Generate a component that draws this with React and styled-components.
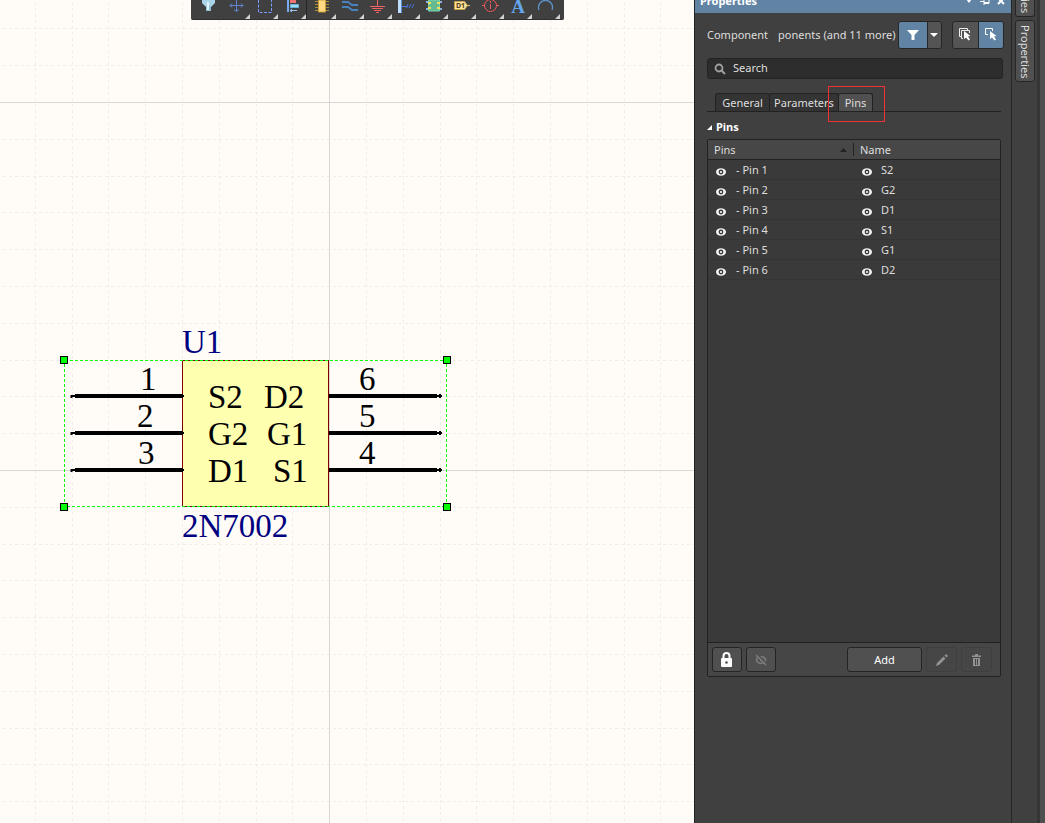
import React from "react";
import styled, { createGlobalStyle, css } from "styled-components";

const GlobalStyle = createGlobalStyle`
  *, *::before, *::after { box-sizing: border-box; }
  body {
    margin: 0;
    background: #404040;
    color: #dedede;
    font-family: "Noto Sans", "Open Sans", sans-serif;
    font-size: 11px;
    line-height: 20px;
  }
  button, input { font: inherit; color: inherit; }
`;

const Workspace = styled.div`
  display: flex;
  height: 100vh;
  overflow: hidden;
`;

const Editor = styled.main`
  position: relative;
  flex: 1;
  min-width: 0;
  background: #fffcf8;
`;

const Sheet = styled.svg`
  display: block;
  width: 100%;
  height: 100%;
`;

const Toolbar = styled.div`
  position: absolute;
  top: 0;
  left: 191px;
  display: flex;
  height: 20px;
  padding: 0 4px 0 3px;
  background: #404040;
  border-bottom: 1px solid #342e2e;
  border-radius: 0 0 2px 2px;
`;

const ToolButton = styled.button`
  width: 28px;
  height: 19px;
  padding: 0;
  border: 0;
  background: none;
  ${(p) => p.$divided && css`
    margin-right: 2px;
    box-shadow: 1px 0 0 #262626;
  `}

  svg { display: block; }
`;

const Panel = styled.aside`
  width: 318px;
  flex: none;
  background: #404040;
  border-left: 1px solid #222;
  border-right: 1px solid #262626;
`;

const PanelHeader = styled.header`
  display: flex;
  align-items: flex-end;
  height: 13px;
  padding: 0 2px 0 5px;
  overflow: hidden;
  background: #6284a4;
  color: #fff;
`;

const PanelTitle = styled.h1`
  flex: 1;
  margin: 0;
  font-size: 11px;
  font-weight: 700;
  line-height: 24px;
`;

const HeaderButton = styled.button`
  display: flex;
  align-items: center;
  justify-content: center;
  width: 16px;
  height: 24px;
  padding: 0;
  border: 0;
  background: none;
`;

const PanelBody = styled.div`
  padding: 8px 8px 0 12px;
`;

const ScopeRow = styled.div`
  display: flex;
  align-items: center;
  height: 28px;
  gap: 10px;
`;

const ScopeFilter = styled.span`
  flex: 1;
  text-align: right;
  white-space: nowrap;
  margin-right: -8px;
`;

const ButtonGroup = styled.div`
  display: flex;
  flex: none;
  height: 28px;
  border: 1px solid #262626;
  border-radius: 3px;
  overflow: hidden;
`;

const GroupButton = styled.button`
  display: flex;
  align-items: center;
  justify-content: center;
  width: ${(p) => (p.$narrow ? 14 : p.$wide ? 28 : 25)}px;
  padding: 0;
  border: 0;
  background: ${(p) => (p.$active ? "#6284a4" : "#545454")};

  & + & { border-left: 1px solid #262626; }
`;

const SearchBox = styled.label`
  display: flex;
  align-items: center;
  gap: 7px;
  height: 21px;
  margin-top: 9px;
  padding: 0 6px;
  border: 1px solid #232323;
  border-radius: 3px;
  background: #2d2d2d;
`;

const SearchInput = styled.input`
  flex: 1;
  min-width: 0;
  height: 19px;
  padding: 0 0 2px;
  border: 0;
  outline: 0;
  background: none;

  &::placeholder { color: #dedede; opacity: 1; }
`;

const Tabs = styled.div`
  position: relative;
  display: flex;
  margin: 14px 2px 0 0;
  padding-left: 8px;
  border-bottom: 1px solid #222;
`;

const Tab = styled.button`
  height: 18px;
  width: ${(p) => p.$width}px;
  padding: 0;
  line-height: 18px;
  border: 1px solid #222;
  border-width: 1px 1px 0;
  border-radius: 3px 3px 0 0;
  background: ${(p) => (p.$active ? "#505050" : "#343434")};

  & + & { margin-left: -1px; }
`;

const Highlight = styled.div`
  position: absolute;
  top: -7px;
  left: 121px;
  width: 57px;
  height: 36px;
  border: 1px solid #f03232;
  pointer-events: none;
`;

const SectionTitle = styled.h2`
  display: flex;
  align-items: center;
  gap: 4px;
  height: 20px;
  margin: 5px 0 2px;
  color: #fff;
  font-size: 11px;
  font-weight: 700;
`;

const GridBox = styled.section`
  margin-right: 2px;
  border: 1px solid #222;
  border-radius: 2px;
  background: #3a3a3a;
`;

const GridArea = styled.div`
  min-height: 502px;
`;

const PinTable = styled.table`
  width: 100%;
  table-layout: fixed;
  border-collapse: separate;
  border-spacing: 0;
`;

const HeadCell = styled.th`
  height: 20px;
  padding: 0 6px;
  border-bottom: 1px solid #222;
  background: #474747;
  font-weight: 400;
  line-height: 19px;
  text-align: left;
  ${(p) => p.$first && css`width: 146px;`}
`;

const HeadLabel = styled.span`
  display: flex;
  align-items: center;
  justify-content: space-between;
  height: 13px;
  ${(p) => p.$divided && css`
    margin-right: -1px;
    padding-right: 6px;
    border-right: 1px solid #222;
    margin-right: -6px;
  `}
`;

const Cell = styled.td`
  height: 20px;
  padding: 0 8px;
  border-bottom: 1px solid #353535;
  line-height: 19px;
`;

const CellContent = styled.span`
  display: flex;
  align-items: center;
  gap: ${(p) => p.$gap}px;
`;

const Footer = styled.footer`
  display: flex;
  align-items: center;
  gap: 4px;
  height: 34px;
  padding: 0 8px 0 4px;
  border-top: 1px solid #222;
  background: #464646;
`;

const FooterButton = styled.button`
  display: flex;
  align-items: center;
  justify-content: center;
  width: ${(p) => (p.$primary ? 75 : p.$flat ? 31 : 30)}px;
  height: 25px;
  padding: 0;
  border: 1px solid ${(p) => (p.$flat ? "#3f3f3f" : "#242424")};
  border-radius: 3px;
  background: ${(p) => (p.$flat ? "#464646" : "#505050")};
  color: #fff;
  ${(p) => p.$primary && css`margin-left: auto;`}
`;

const SideBar = styled.nav`
  display: flex;
  flex-direction: column;
  gap: 3px;
  width: 33px;
  flex: none;
  padding-left: 3px;
  background: linear-gradient(90deg, #404040 25px, #353535 25px, #353535 28px, #4f4f4f 28px);
`;

const SideTab = styled.button`
  display: flex;
  align-items: center;
  justify-content: flex-end;
  width: 20px;
  height: ${(p) => (p.$cut ? 17 : 62)}px;
  padding: 0 0 3px;
  overflow: hidden;
  border: 1px solid #262626;
  border-top-width: ${(p) => (p.$cut ? 0 : 1)}px;
  border-radius: ${(p) => (p.$cut ? "0 0 3px 3px" : "3px")};
  background: #505050;
  line-height: 18px;
  writing-mode: vertical-rl;
`;

const PITCH = 36.8;
const steps = Array.from({ length: 60 }, (_, i) => i);

function SheetGrid() {
  return (
    <g shapeRendering="crispEdges">
      <g stroke="#efedea" strokeDasharray="3 3">
        {steps.map((i) => {
          const x = Math.round(34.8 + i * PITCH) + 0.5;
          return <line key={x} x1={x} x2={x} y1="2" y2="3000" />;
        })}
        {steps.map((i) => {
          const y = Math.round(28.4 + i * PITCH) + 0.5;
          return <line key={y} y1={y} y2={y} x1="3" x2="3000" />;
        })}
      </g>
      <path d="M329.5 0V3000M0 102.5H3000M0 470.5H3000" stroke="#d9d7d4" />
    </g>
  );
}

const pinRows = [396, 433, 470];
const symbolTexts = [
  ["1", 140, 390], ["2", 137, 427], ["3", 138, 464],
  ["6", 359, 390], ["5", 359, 427], ["4", 359, 464],
  ["S2", 208, 408], ["G2", 208, 445], ["D1", 208, 482],
  ["D2", 264, 408], ["G1", 267, 445], ["S1", 273, 482],
];
const handles = [[60, 356], [443, 356], [60, 503], [443, 503]];

function Symbol() {
  return (
    <g fontFamily='"Liberation Serif", serif' fontSize="33">
      <rect x="182.5" y="360.5" width="146" height="146" fill="#ffffb0" stroke="#800000" />
      {pinRows.map((y) => (
        <g key={y} stroke="#000">
          <path d={`M75 ${y}H183M329 ${y}H437`} strokeWidth="4" />
          <path d={`M72 ${y}H184M329 ${y}H442`} strokeWidth="2" />
          <path d={`M71.5 ${y - 1}v3M440 ${y - 2}v4`} strokeWidth="2" />
        </g>
      ))}
      {symbolTexts.map(([text, x, y]) => (
        <text key={text} x={x} y={y}>{text}</text>
      ))}
      <g fill="#000080">
        <text x="182" y="353">U1</text>
        <text x="182" y="537">2N7002</text>
      </g>
      <rect x="64.5" y="360.5" width="382" height="146" fill="none" stroke="#0f0" strokeDasharray="3 2" shapeRendering="crispEdges" />
      {handles.map(([x, y]) => (
        <rect key={`${x}-${y}`} x={x + 0.5} y={y + 0.5} width="7" height="7" fill="#0f0" stroke="#000" />
      ))}
    </g>
  );
}

const tools = [
  { name: "Selection filter", plain: true, art: (
    <>
      <path d="M8 0h13v3l-4 4h-5L8 3z" fill="#a9d3e6" />
      <path d="M12 6h5v5h-5z" fill="#8fbfd6" /><path d="M13 2h2v8h-2z" fill="#e2f3fa" />
    </>) },
  { name: "Move", art: <path d="M14.500 0v11M8 5.500h13M12 9.500l2.500 2 2.500-2M10 3.500l-2 2 2 2M19 3.500l2 2-2 2" fill="none" stroke="#6385d4" /> },
  { name: "Select area", art: <path d="M8.500 0v12.500h13V0" fill="none" stroke="#7aa0ff" strokeDasharray="3 1.500" /> },
  { name: "Align", divided: true, art: (
    <>
      <path d="M10 0v12" stroke="#7aaaf0" strokeWidth="2" />
      <path d="M12 0h6v3h-6z" fill="#ed7474" />
      <path d="M12.500 4.500h8v3h-8z" fill="#a5dcf0" stroke="#60b4dc" />
      <path d="M12 10.500h7M14 9l-2 1.500 2 1.500" fill="none" stroke="#9cc3f5" />
    </>) },
  { name: "Place part", art: (
    <>
      <path d="M7 1.500h14M7 4.500h14M7 7.500h14M7 10.500h14" stroke="#a88b36" />
      <path d="M10.500 0h7v12h-7z" fill="#ffd982" stroke="#c79d3d" />
    </>) },
  { name: "Place wire", art: <path d="M6 2h6l4 3h6M6 7h6l4 3h6" fill="none" stroke="#4a82bd" strokeWidth="2" /> },
  { name: "Place power port", art: <path d="M13.500 0v6M6 6.500h15M8 8.500h11M10 10.500h7M12 12.500h3" stroke="#f26464" /> },
  { name: "Place harness", art: (
    <>
      <path d="M6 0h4v13H6z" fill="#bfdcfa" /><path d="M9 0h1v13H9z" fill="#5c8ed4" />
      <path d="M10 6.500h6M14 8l2-4M17 8l2-4M20 8l2-4" stroke="#4774d8" />
    </>) },
  { name: "Place sheet symbol", art: (
    <>
      <path d="M6 2h16M6 9h16" stroke="#85b0e2" strokeWidth="2" />
      <path d="M8.500 0h11v11h-11z" fill="#65bb91" stroke="#80d7ad" />
      <path d="M8 3h3M17 3h3M8 8h3M17 8h3" stroke="#f4e35a" strokeWidth="2" />
    </>) },
  { name: "Place port", art: (
    <>
      <path d="M6.500 1.500h10l3 4-3 4h-10z" fill="#ffe49a" stroke="#c5a04b" />
      <path d="M19 5.500h3" stroke="#e5bc66" />
      <text x="8" y="8" fontSize="7" fontWeight="700" fill="#4b3a17">D1</text>
    </>) },
  { name: "Place directive", art: (
    <>
      <circle cx="14.500" cy="5.500" r="6" fill="none" stroke="#ec5959" />
      <path d="M14.500 4v5M14.500 1v2M6 5.500h3M20 5.500h3" stroke="#ec5959" />
    </>) },
  { name: "Place text", art: <text x="14" y="13" textAnchor="middle" fontFamily='"Liberation Serif", serif' fontSize="19" fontWeight="700" fill="#64a6ee">A</text> },
  { name: "Place arc", art: <path d="M7 10A7 7 0 1 1 20 10" fill="none" stroke="#5b91cd" strokeWidth="1.300" /> },
];

const EyeIcon = () => (
  <svg width="10" height="12" viewBox="0 0 10 12" aria-hidden="true">
    <ellipse cx="5" cy="8" rx="5" ry="3.800" fill="#f4f4f4" />
    <circle cx="5" cy="8" r="2.400" fill="#3a3a3a" />
    <circle cx="5" cy="8" r="1.100" fill="#fff" />
  </svg>
);

const SelectIcon = ({ stacked }) => (
  <svg width="16" height="16" viewBox="0 0 16 16" aria-hidden="true">
    {stacked ? (
      <path d="M4 9.500H2.500v-8h8V3M6 11.500H4.500v-8h8V6" fill="none" stroke="#eee" />
    ) : (
      <path d="M5 7.500H2.500v-6h7V4" fill="none" stroke="#fff" />
    )}
    <path d="M7 4v8l2-1.500 2.500 3 1.500-1L11 9.500l2.500-.5z" fill="#fff" />
  </svg>
);

const pins = [
  ["Pin 1", "S2"], ["Pin 2", "G2"], ["Pin 3", "D1"],
  ["Pin 4", "S1"], ["Pin 5", "G1"], ["Pin 6", "D2"],
];

export default function App() {
  return (
    <Workspace>
      <GlobalStyle />
      <Editor>
        <Sheet>
          <SheetGrid />
          <Symbol />
        </Sheet>
        <Toolbar role="toolbar">
          {tools.map((tool) => (
            <ToolButton key={tool.name} aria-label={tool.name} $divided={tool.divided}>
              <svg width="28" height="19" viewBox="0 0 28 19">
                {tool.art}
                {!tool.plain && <path d="M28 14v5h-5z" fill="#d2d2d2" />}
              </svg>
            </ToolButton>
          ))}
        </Toolbar>
      </Editor>

      <Panel>
        <PanelHeader>
          <PanelTitle>Properties</PanelTitle>
          <HeaderButton aria-label="Panel menu">
            <svg width="8" height="8"><path d="M1 2h6L4 6z" fill="#fff" /></svg>
          </HeaderButton>
          <HeaderButton aria-label="Pin panel">
            <svg width="10" height="10"><path d="M0 5.500h4M4 1v8M4 2.500h5v5H4M4 6.500h5" fill="none" stroke="#fff" /></svg>
          </HeaderButton>
          <HeaderButton aria-label="Close panel">
            <svg width="8" height="8"><path d="M1 1l6 6M7 1L1 7" stroke="#fff" strokeWidth="2" /></svg>
          </HeaderButton>
        </PanelHeader>

        <PanelBody>
          <ScopeRow>
            <span>Component</span>
            <ScopeFilter>ponents (and 11 more)</ScopeFilter>
            <ButtonGroup>
              <GroupButton $active $wide aria-label="Filter">
                <svg width="12" height="12"><path d="M0 1h12L7.500 6v5h-3V6z" fill="#fff" /></svg>
              </GroupButton>
              <GroupButton $narrow aria-label="Filter options">
                <svg width="8" height="4"><path d="M0 0h8L4 4z" fill="#fff" /></svg>
              </GroupButton>
            </ButtonGroup>
            <ButtonGroup>
              <GroupButton aria-label="Select all objects"><SelectIcon stacked /></GroupButton>
              <GroupButton $active aria-label="Select object"><SelectIcon /></GroupButton>
            </ButtonGroup>
          </ScopeRow>

          <SearchBox>
            <svg width="12" height="12" aria-hidden="true">
              <circle cx="5" cy="5" r="3.500" fill="none" stroke="#a0a0a0" strokeWidth="1.800" />
              <path d="M7.500 7.500l3.500 3.500" stroke="#a0a0a0" strokeWidth="2" />
            </svg>
            <SearchInput placeholder="Search" aria-label="Search" />
          </SearchBox>

          <Tabs role="tablist">
            <Tab role="tab" $width={55}>General</Tab>
            <Tab role="tab" $width={70}>Parameters</Tab>
            <Tab role="tab" $width={35} $active aria-selected="true">Pins</Tab>
            <Highlight />
          </Tabs>

          <SectionTitle>
            <svg width="5" height="5" aria-hidden="true"><path d="M5 0v5H0z" fill="#fff" /></svg>
            Pins
          </SectionTitle>

          <GridBox>
            <GridArea>
              <PinTable>
                <thead>
                  <tr>
                    <HeadCell $first>
                      <HeadLabel $divided>
                        Pins
                        <svg width="7" height="4" aria-hidden="true"><path d="M0 4h7L3.500 0z" fill="#222" /></svg>
                      </HeadLabel>
                    </HeadCell>
                    <HeadCell><HeadLabel>Name</HeadLabel></HeadCell>
                  </tr>
                </thead>
                <tbody>
                  {pins.map(([pin, name]) => (
                    <tr key={pin}>
                      <Cell><CellContent $gap={10}><EyeIcon />- {pin}</CellContent></Cell>
                      <Cell><CellContent $gap={9}><EyeIcon />{name}</CellContent></Cell>
                    </tr>
                  ))}
                </tbody>
              </PinTable>
            </GridArea>
            <Footer>
              <FooterButton aria-label="Lock pins">
                <svg width="12" height="16"><path d="M2.500 7V4a3 3 0 0 1 6 0V7" fill="none" stroke="#fff" strokeWidth="2" /><rect x="0" y="6" width="11" height="9" rx="1" fill="#fff" /><circle cx="5.500" cy="10.500" r="1.300" fill="#505050" /></svg>
              </FooterButton>
              <FooterButton aria-label="Hide pins">
                <svg width="12" height="12"><ellipse cx="6" cy="6" rx="4.500" ry="3.200" fill="none" stroke="#7d7d7d" strokeWidth="1.600" /><circle cx="6" cy="6" r="1.200" fill="#7d7d7d" /><path d="M2 0l10 10" stroke="#505050" strokeWidth="1.500" /><path d="M1 1l10 10" stroke="#7d7d7d" strokeWidth="1.300" /></svg>
              </FooterButton>
              <FooterButton $primary>Add</FooterButton>
              <FooterButton $flat aria-label="Edit pin">
                <svg width="12" height="12"><path d="M0 12l1-3 6.500-6.500 2 2L3 11zM8.500 1.500L10 0l2 2-1.500 1.500z" fill="#929292" /></svg>
              </FooterButton>
              <FooterButton $flat aria-label="Delete pin">
                <svg width="9" height="12"><path d="M0 1.500h9v1.500H0zM3 0h3v2H3zM1 4h7v8H1z" fill="#929292" /><path d="M3.500 5v6M5.500 5v6" stroke="#464646" /></svg>
              </FooterButton>
            </Footer>
          </GridBox>
        </PanelBody>
      </Panel>

      <SideBar>
        <SideTab $cut>ies</SideTab>
        <SideTab>Properties</SideTab>
      </SideBar>
    </Workspace>
  );
}
